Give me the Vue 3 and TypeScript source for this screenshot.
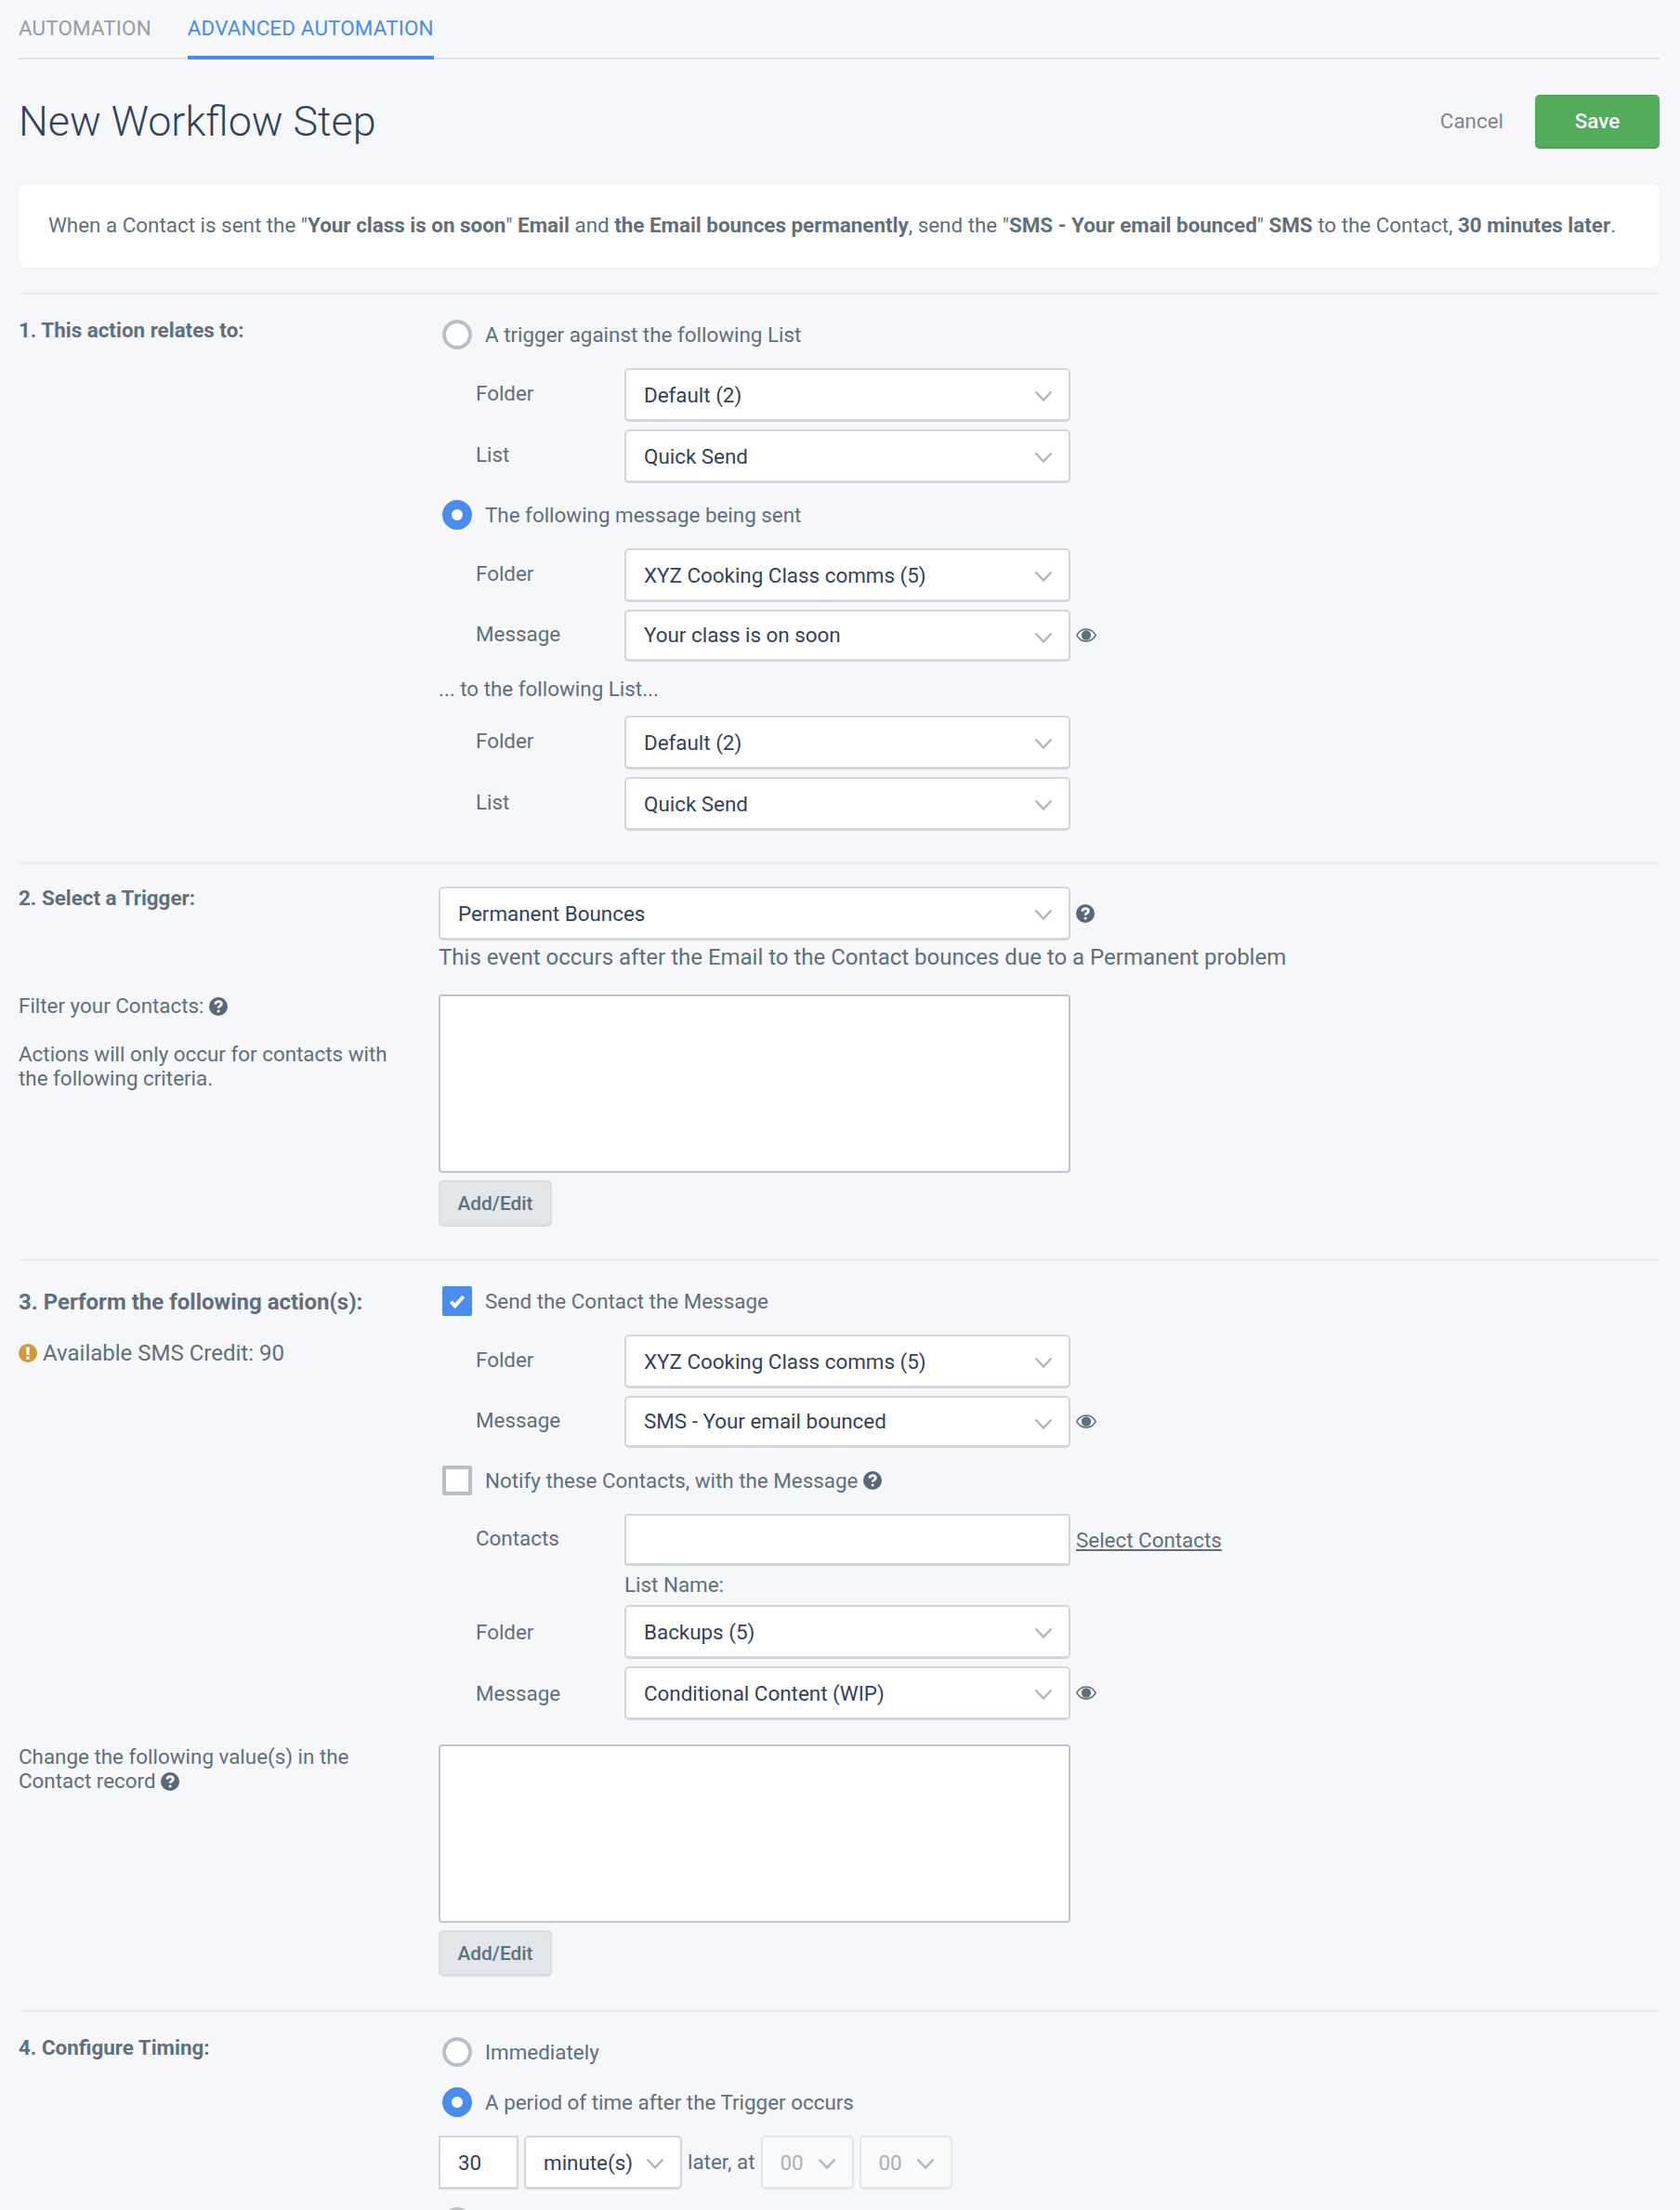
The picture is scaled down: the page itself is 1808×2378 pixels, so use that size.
<template>
  <div class="page">
    <nav class="tabs">
      <a class="tab">AUTOMATION</a>
      <a class="tab active">ADVANCED AUTOMATION</a>
    </nav>

    <header class="head">
      <h1>New Workflow Step</h1>
      <div class="actions">
        <a class="cancel">Cancel</a>
        <button class="save" type="button">Save</button>
      </div>
    </header>

    <div class="summary">
      When a Contact is sent the "<b>Your class is on soon</b>" <b>Email</b> and <b>the Email bounces permanently</b>, send the "<b>SMS - Your email bounced</b>" <b>SMS</b> to the Contact, <b>30 minutes later</b>.
    </div>

    <section class="step step-1">
      <div class="side"><h3>1. This action relates to:</h3></div>
      <div class="main">
        <label class="choice"><span class="radio"></span>A trigger against the following List</label>
        <div v-for="row in triggerList" :key="row.label" class="field">
          <span class="field-label">{{ row.label }}</span>
          <div class="select" :class="row.cls"><span>{{ row.value }}</span><svg class="chev" viewBox="0 0 20 12"><path d="M1.5 1.5 10 10.5 18.5 1.5" /></svg></div>
        </div>
        <label class="choice"><span class="radio on"></span>The following message being sent</label>
        <div v-for="row in messageSent" :key="row.label" class="field">
          <span class="field-label">{{ row.label }}</span>
          <div class="select" :class="row.cls"><span>{{ row.value }}</span><svg class="chev" viewBox="0 0 20 12"><path d="M1.5 1.5 10 10.5 18.5 1.5" /></svg></div>
          <svg v-if="row.eye" class="eye" viewBox="0 0 24 16"><path fill-rule="evenodd" d="M12 0C6.8 0 2.6 3 0 8c2.6 5 6.8 8 12 8s9.400-3 12-8c-2.600-5-6.800-8-12-8Zm0 1.700c-4.300 0-7.800 2.400-10.100 6.300 2.300 3.900 5.800 6.300 10.100 6.300s7.800-2.400 10.100-6.300C19.800 4.100 16.300 1.700 12 1.700Z" /><circle cx="12" cy="8" r="5.600" /></svg>
        </div>
        <p class="to-list">... to the following List...</p>
        <div v-for="row in toList" :key="row.label" class="field">
          <span class="field-label">{{ row.label }}</span>
          <div class="select"><span>{{ row.value }}</span><svg class="chev" viewBox="0 0 20 12"><path d="M1.500 1.500 10 10.500 18.500 1.500" /></svg></div>
        </div>
      </div>
    </section>

    <section class="step step-2">
      <div class="side">
        <h3>2. Select a Trigger:</h3>
        <p class="filter-label">Filter your Contacts: <svg class="help" viewBox="0 0 20 20"><circle cx="10" cy="10" r="10" /><path class="mark" d="M6.800 7.600c.2-2 1.500-3 3.300-3 1.900 0 3.200 1.100 3.200 2.700 0 2.400-3.200 2.400-3.200 4.500" /><circle class="dot" cx="10.100" cy="15" r="1.500" /></svg></p>
        <p class="filter-note">Actions will only occur for contacts with the following criteria.</p>
      </div>
      <div class="main">
        <div class="inline">
          <div class="select wide"><span>Permanent Bounces</span><svg class="chev" viewBox="0 0 20 12"><path d="M1.500 1.500 10 10.500 18.500 1.500" /></svg></div>
          <svg class="help side-help" viewBox="0 0 20 20"><circle cx="10" cy="10" r="10" /><path class="mark" d="M6.800 7.600c.2-2 1.500-3 3.300-3 1.900 0 3.200 1.100 3.200 2.700 0 2.400-3.200 2.400-3.200 4.500" /><circle class="dot" cx="10.100" cy="15" r="1.500" /></svg>
        </div>
        <p class="event-note">This event occurs after the Email to the Contact bounces due to a Permanent problem</p>
        <div class="textarea"></div>
        <button class="add" type="button">Add/Edit</button>
      </div>
    </section>

    <section class="step step-3">
      <div class="side">
        <h3 class="big">3. Perform the following action(s):</h3>
        <p class="credit"><svg class="warn" viewBox="0 0 20 20"><circle cx="10" cy="10" r="10" /><path d="M8.200 3.500h3.600l-.4 8.500H8.600ZM8.400 13.500h3.200v3.200H8.400Z" fill="#fff" /></svg>Available SMS Credit: 90</p>
        <p class="change-label">Change the following value(s) in the Contact record <svg class="help" viewBox="0 0 20 20"><circle cx="10" cy="10" r="10" /><path class="mark" d="M6.800 7.600c.2-2 1.500-3 3.300-3 1.900 0 3.200 1.100 3.200 2.700 0 2.400-3.200 2.400-3.200 4.500" /><circle class="dot" cx="10.100" cy="15" r="1.500" /></svg></p>
      </div>
      <div class="main">
        <label class="choice"><span class="check on"><svg viewBox="0 0 16 14"><path d="M2 7.500 6 11.500 14 2.500" /></svg></span>Send the Contact the Message</label>
        <div v-for="row in sendMessage" :key="row.label" class="field">
          <span class="field-label">{{ row.label }}</span>
          <div class="select" :class="row.cls"><span>{{ row.value }}</span><svg class="chev" viewBox="0 0 20 12"><path d="M1.500 1.500 10 10.500 18.500 1.500" /></svg></div>
          <svg v-if="row.eye" class="eye" viewBox="0 0 24 16"><path fill-rule="evenodd" d="M12 0C6.800 0 2.600 3 0 8c2.600 5 6.800 8 12 8s9.400-3 12-8c-2.600-5-6.800-8-12-8Zm0 1.700c-4.300 0-7.800 2.400-10.100 6.300 2.300 3.900 5.800 6.300 10.100 6.300s7.800-2.400 10.100-6.300C19.800 4.100 16.300 1.700 12 1.700Z" /><circle cx="12" cy="8" r="5.600" /></svg>
        </div>
        <label class="choice notify"><span class="check"></span>Notify these Contacts, with the Message <svg class="help" viewBox="0 0 20 20"><circle cx="10" cy="10" r="10" /><path class="mark" d="M6.800 7.600c.2-2 1.500-3 3.300-3 1.900 0 3.200 1.100 3.200 2.700 0 2.400-3.200 2.400-3.200 4.500" /><circle class="dot" cx="10.100" cy="15" r="1.500" /></svg></label>
        <div class="field contacts">
          <span class="field-label">Contacts</span>
          <div class="input"></div>
          <a class="select-contacts">Select Contacts</a>
        </div>
        <p class="list-name">List Name:</p>
        <div v-for="row in notifyMessage" :key="row.label" class="field">
          <span class="field-label">{{ row.label }}</span>
          <div class="select"><span>{{ row.value }}</span><svg class="chev" viewBox="0 0 20 12"><path d="M1.500 1.500 10 10.500 18.500 1.500" /></svg></div>
          <svg v-if="row.eye" class="eye" viewBox="0 0 24 16"><path fill-rule="evenodd" d="M12 0C6.800 0 2.600 3 0 8c2.600 5 6.800 8 12 8s9.400-3 12-8c-2.600-5-6.800-8-12-8Zm0 1.700c-4.300 0-7.800 2.400-10.100 6.300 2.300 3.900 5.800 6.300 10.100 6.300s7.800-2.400 10.100-6.300C19.800 4.100 16.300 1.700 12 1.700Z" /><circle cx="12" cy="8" r="5.600" /></svg>
        </div>
        <div class="textarea change"></div>
        <button class="add" type="button">Add/Edit</button>
      </div>
    </section>

    <section class="step step-4">
      <div class="side"><h3>4. Configure Timing:</h3></div>
      <div class="main">
        <label class="choice"><span class="radio"></span>Immediately</label>
        <label class="choice"><span class="radio on"></span>A period of time after the Trigger occurs</label>
        <div class="timing">
          <div class="input number">30</div>
          <div class="select unit"><span>minute(s)</span><svg class="chev" viewBox="0 0 20 12"><path d="M1.500 1.500 10 10.500 18.500 1.500" /></svg></div>
          <span class="later">later, at</span>
          <div class="select time disabled"><span>00</span><svg class="chev" viewBox="0 0 20 12"><path d="M1.500 1.500 10 10.500 18.500 1.500" /></svg></div>
          <div class="select time disabled"><span>00</span><svg class="chev" viewBox="0 0 20 12"><path d="M1.500 1.500 10 10.500 18.500 1.500" /></svg></div>
        </div>
        <label class="choice"><span class="radio"></span></label>
      </div>
    </section>
  </div>
</template>

<script setup lang="ts">
interface Row {
  label: string
  value: string
  eye?: boolean
  cls?: string
}

const triggerList: Row[] = [
  { label: 'Folder', value: 'Default (2)' },
  { label: 'List', value: 'Quick Send' },
]
const messageSent: Row[] = [
  { label: 'Folder', value: 'XYZ Cooking Class comms (5)' },
  { label: 'Message', value: 'Your class is on soon', eye: true, cls: 'short' },
]
const toList: Row[] = [
  { label: 'Folder', value: 'Default (2)' },
  { label: 'List', value: 'Quick Send' },
]
const sendMessage: Row[] = [
  { label: 'Folder', value: 'XYZ Cooking Class comms (5)' },
  { label: 'Message', value: 'SMS - Your email bounced', eye: true, cls: 'short' },
]
const notifyMessage: Row[] = [
  { label: 'Folder', value: 'Backups (5)' },
  { label: 'Message', value: 'Conditional Content (WIP)', eye: true },
]
</script>

<style>
html, body {
  margin: 0;
  background: #f5f7fa;
}
</style>

<style scoped>
.page {
  box-sizing: border-box;
  width: 1808px;
  height: 2378px;
  overflow: hidden;
  padding: 0 22px 0 20px;
  font-family: Roboto, "Liberation Sans", sans-serif;
  font-size: 22.4px;
  line-height: 26px;
  color: #606f7b;
  background: #f5f7fa;
}
.tabs {
  display: flex;
  gap: 39px;
  height: 64px;
  box-sizing: border-box;
  border-bottom: 2px solid #dee0e4;
  letter-spacing: 0.16px;
}
.tab {
  height: 64px;
  box-sizing: border-box;
  padding-top: 17px;
  color: #979ea8;
}
.tab.active {
  color: #4a8cec;
  border-bottom: 4px solid #4a8cec;
}
.head {
  display: flex;
  justify-content: space-between;
  align-items: center;
  height: 58px;
  margin-top: 38px;
}
h1 {
  margin: 0;
  font-size: 44.8px;
  font-weight: 300;
  line-height: 58px;
  color: #33425a;
}
.actions {
  display: flex;
  align-items: center;
  gap: 34px;
}
.cancel {
  margin-top: -2px;
  color: #7c8691;
}
.save {
  width: 134px;
  height: 58px;
  padding: 0 0 2px;
  border: 0;
  border-top: 1px solid #4aa050;
  border-bottom: 2px solid #4aa050;
  border-radius: 5px;
  background: #51ad5c;
  color: #fff;
  font: 500 22.4px Roboto, sans-serif;
}
.summary {
  margin-top: 38px;
  height: 90px;
  box-sizing: border-box;
  padding: 31px 32px 0;
  background: #fff;
  border-radius: 8px;
  box-shadow: 0 0 2px rgba(0, 0, 0, 0.08);
  white-space: nowrap;
}
.summary b {
  font-weight: 700;
}
.step {
  display: flex;
  border-top: 3px solid #eceef1;
}
.step-1 {
  margin-top: 26px;
  height: 613px;
  padding-top: 27px;
  box-sizing: border-box;
}
.step-2 {
  height: 427px;
  padding-top: 24px;
  box-sizing: border-box;
}
.step-3 {
  height: 808px;
  padding-top: 27px;
  box-sizing: border-box;
}
.step-4 {
  padding-top: 27px;
}
.side {
  width: 452px;
  flex: none;
}
.main {
  flex: 1;
}
h3 {
  margin: -1px 0 1px;
  font-size: 22.4px;
  font-weight: 700;
  line-height: 26px;
}
.step-1 h3 {
  margin-top: -2px;
}
.step-4 h3 {
  margin-top: -2px;
}
h3.big {
  font-size: 24px;
  line-height: 32px;
  margin: 1px 0 1px;
}
.filter-label {
  margin: 90px 0 0;
}
.filter-note {
  margin: 26px 0 0;
  width: 410px;
}
.credit {
  display: flex;
  align-items: center;
  gap: 6px;
  margin: 26px 0 0;
  font-size: 24px;
}
.change-label {
  margin: 408px 0 0;
  width: 400px;
}
.choice {
  display: flex;
  align-items: center;
  gap: 14px;
  height: 32px;
  padding-left: 4px;
}
.radio {
  flex: none;
  box-sizing: border-box;
  width: 32px;
  height: 32px;
  border-radius: 50%;
  border: 4px solid #b8bfc7;
  background: #fff;
}
.radio.on {
  border: 10px solid #4a8cec;
}
.check {
  flex: none;
  box-sizing: border-box;
  width: 32px;
  height: 32px;
  border: 4px solid #b8bfc7;
  border-radius: 2px;
  background: #fff;
}
.check.on {
  display: flex;
  align-items: center;
  justify-content: center;
  border: 0;
  background: #4a8cec;
}
.check svg {
  width: 18px;
  height: 16px;
  fill: none;
  stroke: #fff;
  stroke-width: 3.5;
}
.field {
  display: flex;
  align-items: center;
  padding-left: 40px;
  margin-top: 8px;
}
.choice + .field {
  margin-top: 20px;
}
.field-label {
  width: 160px;
  flex: none;
  margin-top: -5px;
}
.list-name ~ .field .field-label {
  margin-top: 0;
}
.select, .input {
  position: relative;
  box-sizing: border-box;
  display: flex;
  align-items: center;
  width: 480px;
  height: 58px;
  padding-left: 19px;
  border: 2px solid #d3d7dc;
  border-bottom-width: 3px;
  border-radius: 5px;
  background: #fff;
  color: #33425a;
  flex: none;
}
.select.short {
  height: 56px;
  padding-bottom: 2px;
}
.select.wide {
  width: 680px;
}
.chev {
  position: absolute;
  right: 17px;
  top: 22px;
  width: 20px;
  height: 12px;
  fill: none;
  stroke: #aeb5bd;
  stroke-width: 2.4;
}
.eye {
  width: 22px;
  height: 15px;
  margin: -2px 0 0 6px;
  fill: #606f7b;
}
.help {
  width: 20px;
  height: 20px;
  fill: #59677a;
  vertical-align: -3px;
}
.help .mark {
  fill: none;
  stroke: #fff;
  stroke-width: 2.800;
}
.help .dot {
  fill: #fff;
}
.side-help {
  margin-left: 6px;
}
.warn {
  flex: none;
  width: 20px;
  height: 20px;
  fill: #cf9a3c;
}
.choice + .choice {
  margin-top: 22px;
}
.field + .choice {
  margin-top: 18px;
}
.to-list {
  margin: 16px 0 0;
}
.to-list + .field {
  margin-top: 16px;
}
.inline {
  display: flex;
  align-items: center;
}
.event-note {
  margin: 5px 0 0;
  font-size: 24px;
}
.textarea {
  box-sizing: border-box;
  width: 680px;
  height: 192px;
  margin-top: 27px;
  border: 2px solid #c1c6cc;
  border-radius: 4px;
  background: #fff;
}
.add {
  display: block;
  box-sizing: border-box;
  width: 122px;
  height: 50px;
  margin-top: 8px;
  border: 2px solid #d8dee3;
  border-bottom-width: 3px;
  border-radius: 5px;
  background: #e1e6ea;
  color: #606f7b;
  font: 500 20.8px Roboto, sans-serif;
}
.step-3 .field + .notify {
  margin-top: 19px;
}
.notify .help {
  margin-left: -8px;
}
.contacts {
  margin-top: 23px;
}
.contacts .input {
  height: 56px;
  border-radius: 3px;
}
.select-contacts {
  margin-left: 6px;
  text-decoration: underline;
}
.list-name {
  margin: 7px 0 0 200px;
  line-height: 26px;
}
.list-name + .field {
  margin-top: 9px;
}
.change {
  margin-top: 26px;
}
.timing {
  display: flex;
  align-items: center;
  gap: 6px;
  margin-top: 20px;
}
.input.number {
  width: 86px;
  border-radius: 0;
}
.select.unit {
  width: 170px;
}
.later {
  margin: 0 0 3px;
}
.select.time {
  width: 100px;
}
.select.disabled {
  background: #f8f9fa;
  color: #a9b0b9;
  border-color: #e4e7ea;
}
.timing + .choice {
  margin-top: 19px;
}
</style>
